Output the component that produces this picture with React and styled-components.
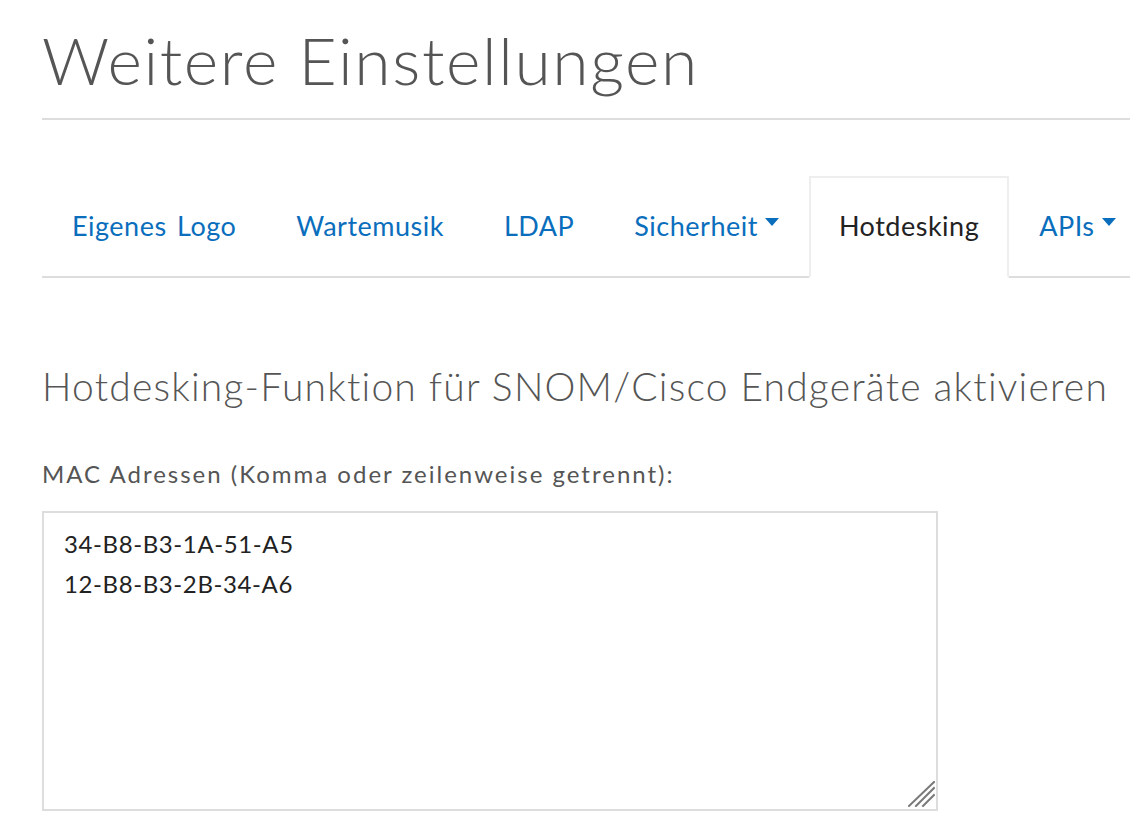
import React from "react";
import styled, { createGlobalStyle } from "styled-components";

const GlobalStyle = createGlobalStyle`
  body {
    margin: 0;
    background: #fff;
    font-family: Lato, "Open Sans", sans-serif;
    color: #555;
    overflow: hidden;
  }
`;

const Page = styled.div`
  padding: 0 0 0 42px;
  width: 1088px;
`;

const Title = styled.h1`
  margin: 0;
  padding: 22px 0 20px;
  font-size: 66px;
  line-height: 76px;
  font-weight: 300;
  letter-spacing: 1.6px;
  color: #555;
  border-bottom: 2px solid #ddd;
`;

const Tabs = styled.ul`
  display: flex;
  list-style: none;
  margin: 56px 0 0;
  padding: 0;
  border-bottom: 2px solid #ddd;
`;

const Tab = styled.li`
  box-sizing: border-box;
  margin-bottom: -2px;
  padding: 0 28px 4px;
  height: 102px;
  display: flex;
  align-items: center;
  white-space: nowrap;
  font-size: 27px;
  letter-spacing: 0.5px;
  word-spacing: 3px;
  color: ${(p) => (p.active ? "#222" : "#0a6ebd")};
  background: ${(p) => (p.active ? "#fff" : "transparent")};
  border: 2px solid ${(p) => (p.active ? "#eee" : "transparent")};
  border-bottom-color: ${(p) => (p.active ? "#fff" : "transparent")};
  cursor: pointer;
`;

const Caret = styled.span`
  display: inline-block;
  margin-left: 7px;
  width: 0;
  height: 0;
  border-left: 7px solid transparent;
  border-right: 7px solid transparent;
  border-top: 8px solid #0a6ebd;
  transform: translateY(-3px);
`;

const Section = styled.h2`
  margin: 84px 0 0;
  font-size: 39px;
  line-height: 48px;
  font-weight: 300;
  letter-spacing: 1.2px;
  color: #555;
`;

const Label = styled.label`
  display: block;
  margin-top: 49px;
  font-size: 24px;
  line-height: 30px;
  letter-spacing: 2px;
  color: #555;
`;

const Field = styled.div`
  position: relative;
  margin-top: 22px;
  width: 896px;
`;

const TextArea = styled.textarea`
  display: block;
  box-sizing: border-box;
  width: 100%;
  height: 300px;
  margin: 0;
  padding: 11px 20px;
  font-family: Lato, "Open Sans", sans-serif;
  font-size: 24px;
  line-height: 40px;
  letter-spacing: 0.6px;
  color: #222;
  border: 2px solid #ddd;
  border-radius: 0;
  outline: none;
  resize: none;
`;

const Grip = styled.svg`
  position: absolute;
  right: 3px;
  bottom: 4px;
  width: 27px;
  height: 26px;
  pointer-events: none;
`;

const tabs = [
  { label: "Eigenes Logo" },
  { label: "Wartemusik" },
  { label: "LDAP" },
  { label: "Sicherheit", menu: true },
  { label: "Hotdesking", active: true },
  { label: "APIs", menu: true },
];

export default function App() {
  return (
    <>
      <GlobalStyle />
      <Page>
        <Title>Weitere Einstellungen</Title>
        <Tabs>
          {tabs.map((t) => (
            <Tab key={t.label} active={t.active}>
              {t.label}
              {t.menu && <Caret />}
            </Tab>
          ))}
        </Tabs>
        <Section>Hotdesking-Funktion für SNOM/Cisco Endgeräte aktivieren</Section>
        <Label htmlFor="macs">MAC Adressen (Komma oder zeilenweise getrennt):</Label>
        <Field>
          <TextArea
            id="macs"
            defaultValue={"34-B8-B3-1A-51-A5\n12-B8-B3-2B-34-A6"}
          />
          <Grip viewBox="0 0 27 26">
            <g stroke="#7a7a7a" strokeWidth="2" strokeLinecap="square">
              <line x1="1" y1="25" x2="26" y2="1" />
              <line x1="8" y1="25" x2="26" y2="7" />
              <line x1="15" y1="25" x2="26" y2="14" />
            </g>
          </Grip>
        </Field>
      </Page>
    </>
  );
}
